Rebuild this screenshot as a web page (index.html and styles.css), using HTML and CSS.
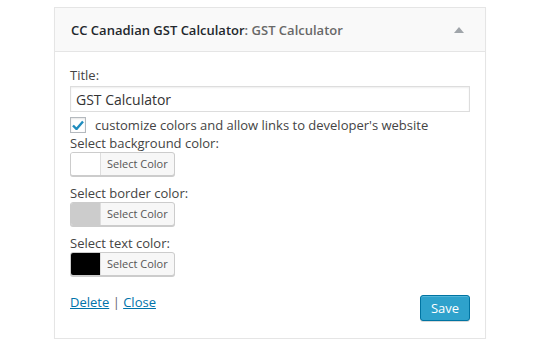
FILE: index.html
```html
<!DOCTYPE html>
<html lang="en">
<head>
  <meta charset="UTF-8" />
  <title>Widget</title>
  <link rel="stylesheet" href="styles.css">
</head>
<body>

  <!-- widget box -->
  <div class="widget">
    <div class="widget-top">
      <h4>CC Canadian GST Calculator<span class="in-title">: GST Calculator</span></h4>
      <span class="arrow"></span>
    </div>

    <div class="widget-inside">
      <p class="field">
        <label for="title">Title:</label>
        <input type="text" id="title" value="GST Calculator" />
      </p>

      <p class="check-row">
        <span class="checkbox">
          <svg width="12" height="10" viewBox="0 0 12 10">
            <path d="M1 5.5 L4.5 9 L11 1.5" fill="none" stroke="#1e8cbe" stroke-width="2.4" />
          </svg>
        </span>
        customize colors and allow links to developer's website
      </p>

      <div class="color-field">
        <label>Select background color:</label>
        <button class="color-btn"><span class="swatch" style="background:#ffffff"></span><span class="btn-text">Select Color</span></button>
      </div>

      <div class="color-field">
        <label>Select border color:</label>
        <button class="color-btn"><span class="swatch" style="background:#cccccc"></span><span class="btn-text">Select Color</span></button>
      </div>

      <div class="color-field">
        <label>Select text color:</label>
        <button class="color-btn"><span class="swatch" style="background:#000000"></span><span class="btn-text">Select Color</span></button>
      </div>

      <div class="widget-control">
        <div class="links">
          <a href="#">Delete</a> | <a href="#">Close</a>
        </div>
        <button class="save">Save</button>
      </div>
    </div>
  </div>

</body>
</html>
```

FILE: styles.css
```css
* {
  margin: 0;
  padding: 0;
  box-sizing: border-box;
}
body {
  background: #fff;
  color: #444;
  font-family: "Open Sans", "Liberation Sans", sans-serif;
  font-size: 13px;
}

.widget {
  width: 432px;
  margin: 7px 0 0 54px;
  border: 1px solid #e5e5e5;
  box-shadow: 0 1px 1px rgba(0,0,0,0.04);
  background: #fff;
}

/* header */
.widget-top {
  height: 44px;
  background: #f9f9f9;
  border-bottom: 1px solid #e5e5e5;
  display: flex;
  align-items: center;
  justify-content: space-between;
  padding: 0 16px;
}
.widget-top h4 {
  font-size: 13px;
  font-weight: 600;
  color: #23282d;
}
.in-title {
  color: #686868;
}
.arrow {
  width: 0;
  height: 0;
  border-left: 5px solid transparent;
  border-right: 5px solid transparent;
  border-bottom: 6px solid #a0a5aa;
  margin-right: 5px;
}

/* body */
.widget-inside {
  padding: 14px 15px 17px;
}
.field label {
  display: block;
  line-height: 18px;
}
.field input {
  display: block;
  width: 100%;
  height: 26px;
  border: 1px solid #ddd;
  box-shadow: inset 0 1px 2px rgba(0,0,0,0.07);
  padding: 0 5px;
  font-family: inherit;
  font-size: 14px;
  color: #333;
  margin-top: 2px;
}
.check-row {
  display: flex;
  align-items: center;
  gap: 9px;
  margin-top: 5px;
  line-height: 16px;
}
.checkbox {
  width: 16px;
  height: 16px;
  border: 1px solid #b4b9be;
  background: #fff;
  display: flex;
  align-items: center;
  justify-content: center;
  box-shadow: inset 0 1px 2px rgba(0,0,0,0.1);
}

.color-field label {
  display: block;
  line-height: 18px;
  margin-top: 1px;
}
.color-field {
  margin-bottom: 8px;
}
.color-btn {
  display: flex;
  height: 24px;
  border: 1px solid #ccc;
  border-radius: 3px;
  background: #f7f7f7;
  box-shadow: 0 1px 0 #ccc;
  overflow: hidden;
  cursor: pointer;
}
.swatch {
  width: 30px;
  height: 100%;
  border-right: 1px solid #ddd;
}
.btn-text {
  padding: 0 6px;
  font-family: "Open Sans", "Liberation Sans", sans-serif;
  font-size: 11px;
  line-height: 22px;
  color: #555;
}

/* footer row */
.widget-control {
  display: flex;
  justify-content: space-between;
  align-items: flex-start;
  margin-top: 17px;
}
.links {
  color: #666;
  line-height: 18px;
}
.links a {
  color: #0073aa;
}
.save {
  width: 50px;
  height: 26px;
  margin-top: 2px;
  background: #2ea2cc;
  border: 1px solid #0074a2;
  border-radius: 3px;
  box-shadow: inset 0 1px 0 rgba(120,200,230,0.5), 0 1px 0 rgba(0,0,0,0.15);
  color: #fff;
  font-family: inherit;
  font-size: 13px;
  cursor: pointer;
}
```
